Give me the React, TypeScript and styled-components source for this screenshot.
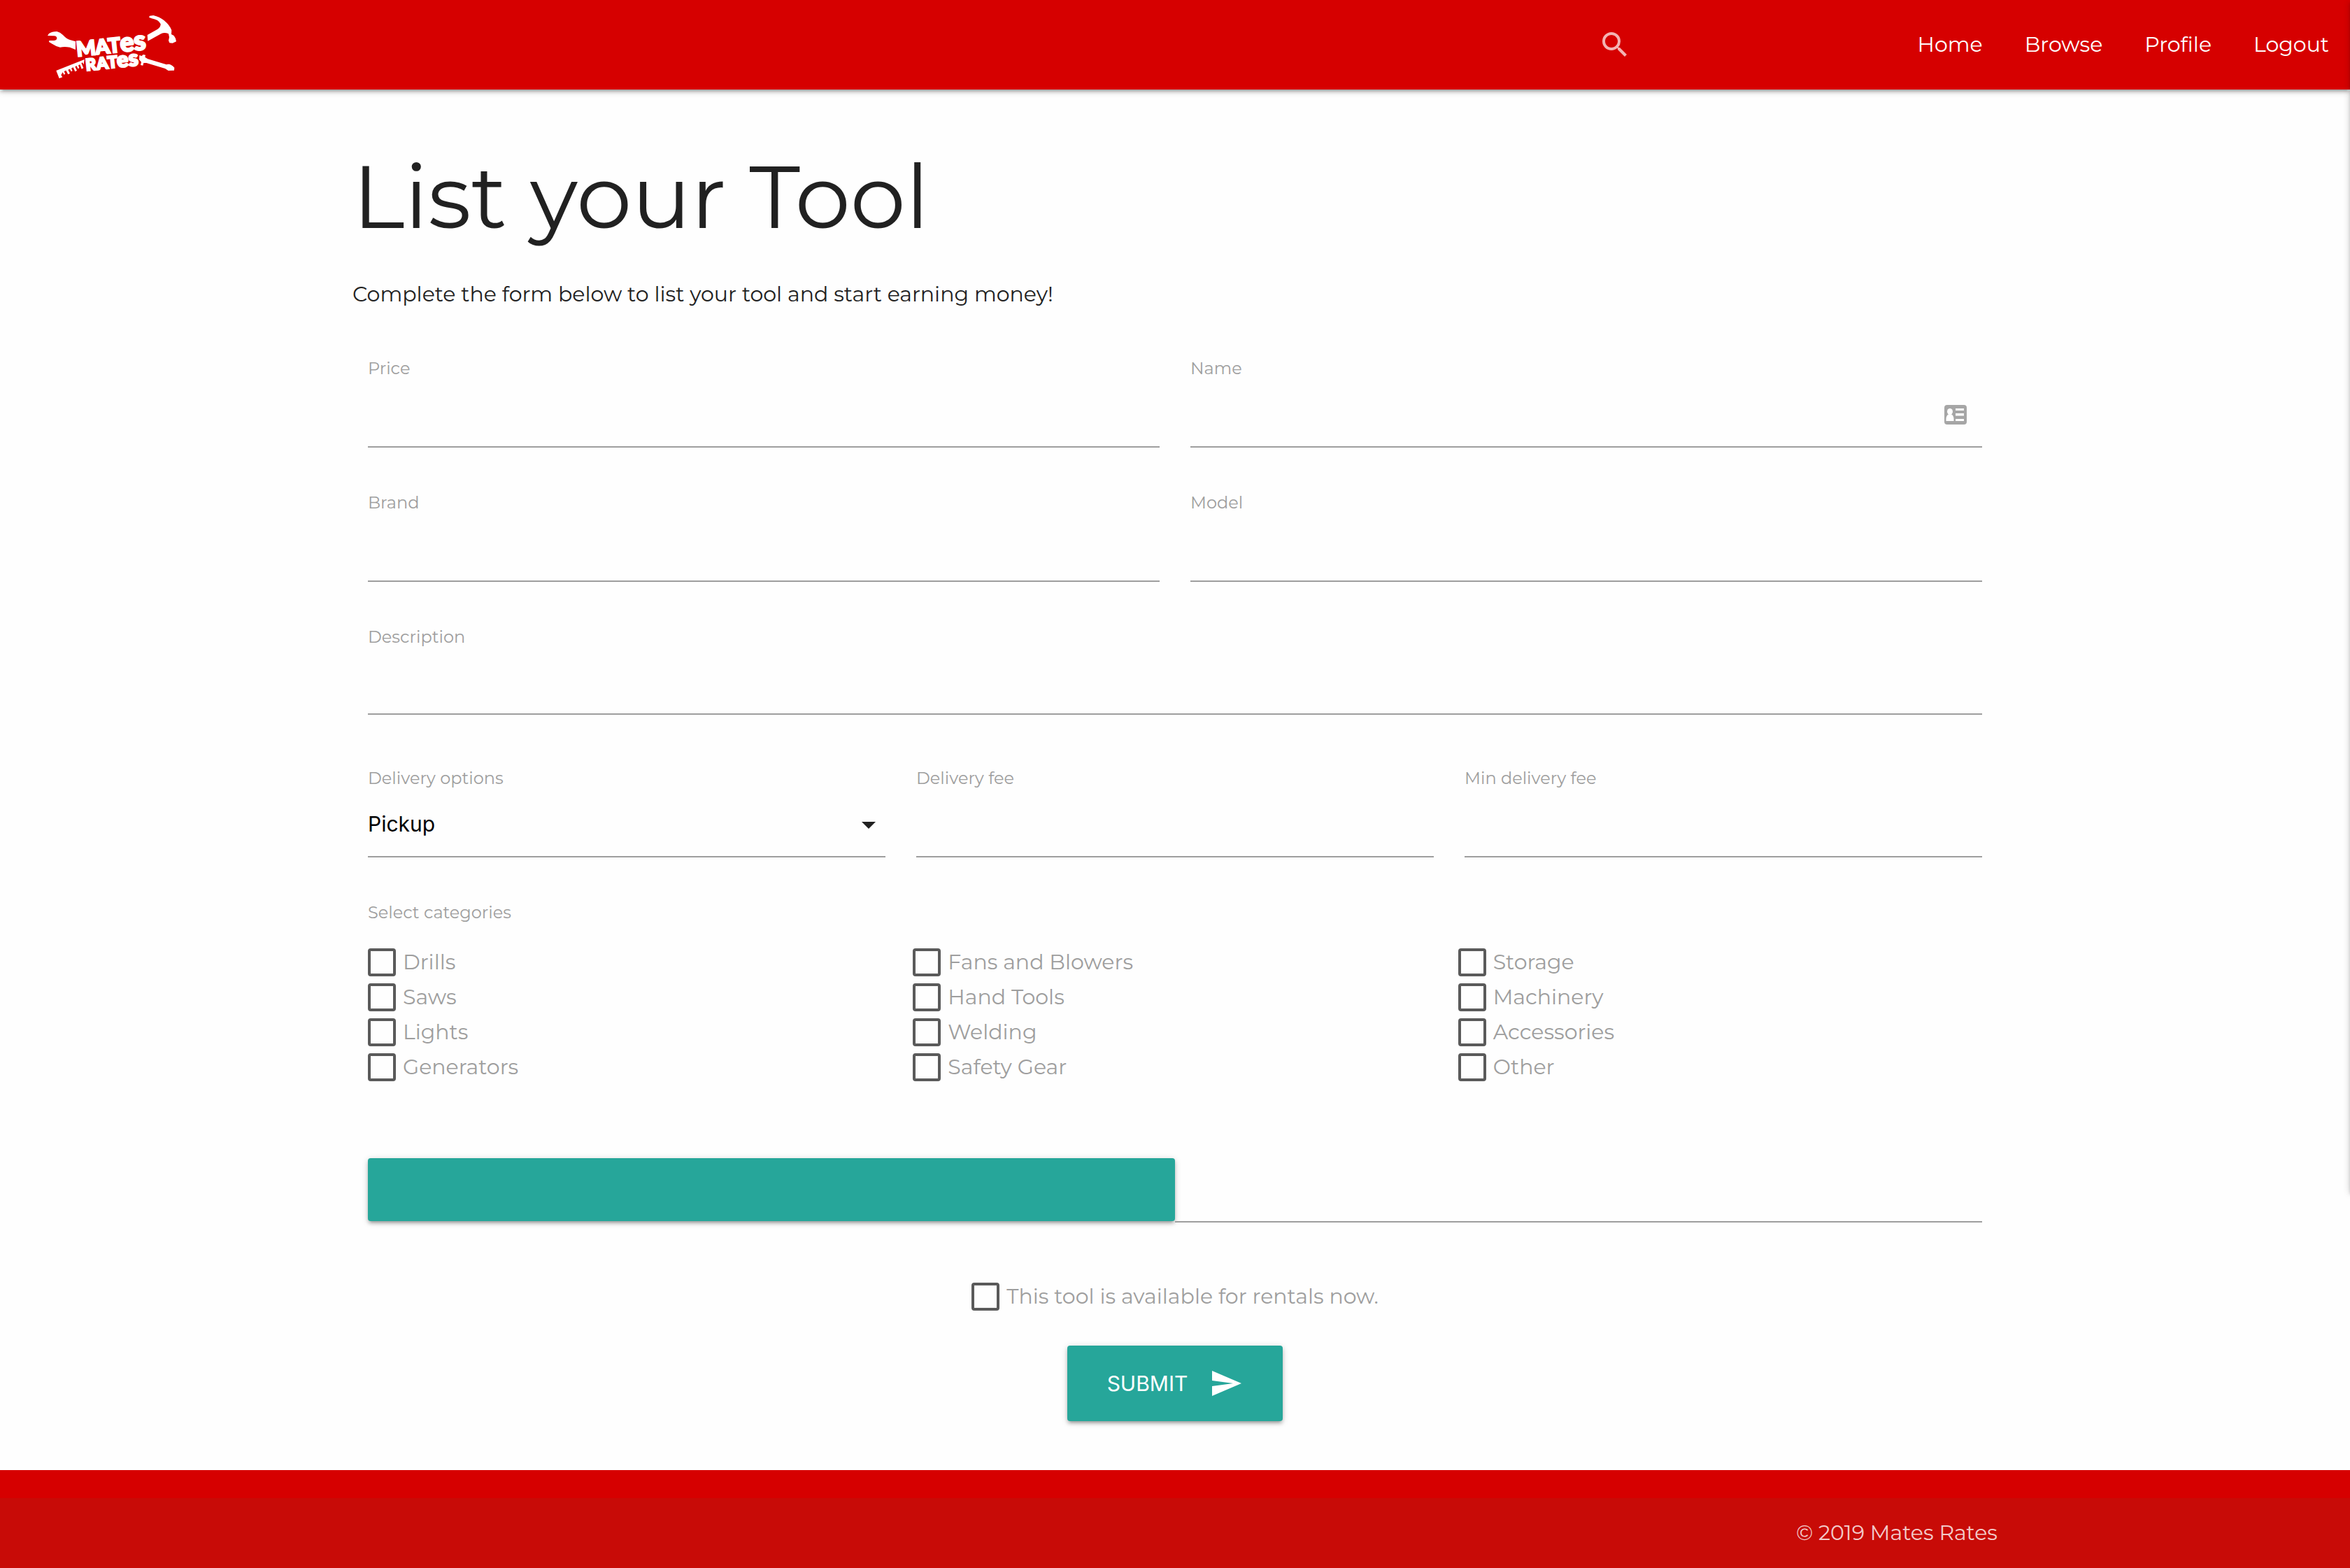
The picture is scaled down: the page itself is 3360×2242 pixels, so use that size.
import React from "react";
import styled, { createGlobalStyle, css } from "styled-components";
import { MdArrowDropDown, MdSearch, MdSend } from "react-icons/md";

const color = {
  red: "#d60000",
  redDark: "#c80b07",
  teal: "#26a69a",
  ink: "#212121",
  muted: "#9e9e9e",
  box: "#5a5a5a",
  page: "#fefefe",
};

const raised = css`
  box-shadow:
    0 4px 4px 0 rgba(0, 0, 0, 0.14),
    0 6px 2px -4px rgba(0, 0, 0, 0.12),
    0 2px 10px 0 rgba(0, 0, 0, 0.2);
`;

const GlobalStyle = createGlobalStyle`
  *, *::before, *::after { box-sizing: border-box; }
  body {
    margin: 0;
    background: ${color.page};
    color: ${color.ink};
    font-family: Montserrat, Inter, "Liberation Sans", sans-serif;
    font-size: 30px;
    line-height: 46px;
  }
  input, select, button { font: inherit; color: inherit; }
`;

const Page = styled.div`
  display: flex;
  flex-direction: column;
  min-height: 100vh;
`;

const NavBar = styled.header`
  display: flex;
  align-items: center;
  height: 128px;
  padding-left: 66px;
  background: ${color.red};
  color: #fff;
  z-index: 1;
  ${raised}
`;

const LogoLink = styled.a`
  display: block;
  margin-right: auto;
  padding-top: 6px;

  svg {
    display: block;
  }
`;

const SearchButton = styled.button`
  display: flex;
  padding: 0;
  margin-right: 379px;
  border: 0;
  background: none;
  color: rgba(255, 255, 255, 0.7);
  font-size: 48px;
`;

const NavLinks = styled.nav`
  display: flex;
`;

const NavLink = styled.a`
  padding: 0 30px;
  color: #fff;
  text-decoration: none;
`;

const DrawerEdge = styled.aside`
  position: fixed;
  top: 0;
  left: 100%;
  width: 600px;
  height: 76vh;
  z-index: 2;
  ${raised}
`;

const Main = styled.main`
  flex: 1;
  width: 70%;
  margin: 0 auto;
  padding: 83px 0 70px;
`;

const Title = styled.h1`
  margin: 0 0 47px;
  font-size: 126px;
  line-height: 140px;
  font-weight: 400;
`;

const Intro = styled.p`
  margin: 0 0 68px;
`;

const Form = styled.form`
  padding: 0 22px;
`;

const Row = styled.div<{ $cols?: number; $after?: number }>`
  display: grid;
  grid-template-columns: repeat(${(p) => p.$cols ?? 1}, 1fr);
  column-gap: 44px;
  margin-bottom: ${(p) => p.$after ?? 64}px;
`;

const Field = styled.div`
  display: flex;
  flex-direction: column;
`;

const caption = css`
  color: ${color.muted};
  font-size: 24px;
  line-height: 30px;
`;

const Label = styled.label`
  ${caption}
`;

const Stack = styled.div`
  display: grid;
  align-items: center;
  justify-items: end;

  > * {
    grid-area: 1 / 1;
  }
  > svg {
    margin-top: 4px;
    pointer-events: none;
  }
`;

const underline = css`
  width: 100%;
  border: 0;
  border-bottom: 2px solid ${color.muted};
  border-radius: 0;
  background: transparent;
  outline: none;
  padding: 0;
`;

const TextInput = styled.input<{ $short?: boolean }>`
  ${underline}
  height: ${(p) => (p.$short ? 96 : 98)}px;
`;

const Select = styled.select`
  ${underline}
  height: 98px;
  padding-top: 4px;
  appearance: none;
  color: #000;
  font-family: Inter, "Liberation Sans", sans-serif;
`;

const Arrow = styled(MdArrowDropDown)`
  width: 48px;
  height: 48px;
`;

const CardIcon = styled.svg`
  width: 32px;
  height: 28px;
  margin-right: 22px;
`;

const Categories = styled.fieldset`
  margin: 0 0 105px;
  padding: 0;
  border: 0;
`;

const Legend = styled.legend`
  ${caption}
  padding: 0;
  margin-bottom: 31px;
`;

const CategoryGrid = styled.div`
  display: grid;
  grid-template-columns: repeat(3, 1fr);
  grid-template-rows: repeat(4, 50px);
  grid-auto-flow: column;
  column-gap: 30px;
`;

const CheckLabel = styled.label`
  display: flex;
  align-items: center;
  gap: 10px;
  height: 50px;
  color: ${color.muted};
`;

const Checkbox = styled.input`
  appearance: none;
  width: 40px;
  height: 40px;
  margin: 0;
  border: 4px solid ${color.box};
  border-radius: 4px;

  &:checked {
    background: ${color.teal};
    border-color: ${color.teal};
  }
`;

const FileRow = styled.div`
  display: grid;
  grid-template-columns: 1fr 1fr;
  align-items: start;
  margin-bottom: 81px;
`;

const FileButton = styled.label`
  height: 90px;
  border-radius: 4px;
  background: ${color.teal};
  overflow: hidden;
  ${raised}

  input {
    width: 100%;
    height: 100%;
    opacity: 0;
  }
`;

const FilePath = styled.input`
  ${underline}
  height: 92px;
`;

const Actions = styled.div`
  display: flex;
  flex-direction: column;
  align-items: center;
  gap: 45px;
`;

const SubmitButton = styled.button`
  display: flex;
  align-items: center;
  gap: 31px;
  height: 108px;
  padding: 0 57px;
  border: 0;
  border-radius: 4px;
  background: ${color.teal};
  color: #fff;
  font-family: Inter, "Liberation Sans", sans-serif;
  text-transform: uppercase;
  ${raised}

  svg {
    width: 48px;
    height: 48px;
  }
`;

const Footer = styled.footer`
  padding-top: 40px;
  background: ${color.red};
`;

const Copyright = styled.div`
  display: flex;
  align-items: center;
  height: 100px;
  background: ${color.redDark};
  color: rgba(255, 255, 255, 0.8);
`;

const FooterInner = styled.div`
  width: 70%;
  margin: 0 auto;
  text-align: right;
`;

function Logo() {
  return (
    <svg width="188" height="92" viewBox="198 63 564 276" fill="#fff" role="img" aria-label="Mates Rates">
      <path d="M204 153 L210 144 Q222 135 244 135 Q258 138 270 150 Q284 166 300 171 L324 178 L324 213 L300 203 Q276 199 258 203 Q240 199 224 188 L210 180 L211 174 L232 174 Q246 171 244 161 Q240 152 228 154 Z" />
      <path d="M639 74 L642 68 L658 66 Q684 72 704 88 Q728 108 736 130 L735 147 L746 153 Q756 166 756 178 L740 185 L727 184 L723 174 L726 160 L723 145 Q706 138 692 144 L634 176 L632 150 L676 125 Q690 116 689 103 Q680 84 650 79 Z" />
      <path d="M241 303 L362 255 L359 277 L354 268 L349 271 L358 292 L350 296 L343 277 L336 280 L340 292 L334 295 L329 283 L322 286 L330 303 L322 307 L314 289 L306 293 L311 304 L305 307 L300 296 L292 299 L300 315 L292 319 L283 302 L275 306 L280 317 L274 320 L269 310 L262 322 L268 331 L254 336 Z" />
      <path d="M598 237 L608 240 L614 234 L624 236 L622 245 L634 253 L714 277 Q730 271 748 290 L747 302 L722 303 L708 294 L628 270 L616 270 L613 281 L603 279 L606 266 L597 256 Z" />
      <g fontFamily="Lato, Inter, sans-serif" fontWeight="900" stroke="#fff" strokeWidth="7" strokeLinejoin="miter">
        <text transform="translate(336 242) rotate(-6)" fontSize="87">
          <tspan x="-5">M</tspan>
          <tspan x="76">A</tspan>
          <tspan x="132">T</tspan>
          <tspan x="183" fontSize="112">e</tspan>
          <tspan x="243" fontSize="116">s</tspan>
        </text>
        <text transform="translate(374 303) rotate(-6)" fontSize="70">
          <tspan x="-4">R</tspan>
          <tspan x="43">A</tspan>
          <tspan x="91">T</tspan>
          <tspan x="131" fontSize="92">e</tspan>
          <tspan x="181" fontSize="94">s</tspan>
        </text>
      </g>
    </svg>
  );
}

function ContactCardIcon() {
  return (
    <CardIcon viewBox="0 0 32 28" aria-hidden="true">
      <rect width="32" height="28" rx="4" fill="#a6a6a6" />
      <g fill="#fff">
        <ellipse cx="8" cy="9.500" rx="4" ry="4.500" />
        <path d="M2.500 23v-3q0-4 3-6.500h5q3 2.500 3 6.500v3z" />
        <path d="M16 5h12v3H16zM16 12h12v3.500H16zM16 20h12v3H16z" />
      </g>
    </CardIcon>
  );
}

type TextFieldProps = { id: string; label: string; short?: boolean; icon?: React.ReactNode };

function TextField({ id, label, short, icon }: TextFieldProps) {
  return (
    <Field>
      <Label htmlFor={id}>{label}</Label>
      <Stack>
        <TextInput id={id} name={id} type="text" $short={short} />
        {icon}
      </Stack>
    </Field>
  );
}

const links = ["Home", "Browse", "Profile", "Logout"];

const categories = [
  "Drills", "Saws", "Lights", "Generators",
  "Fans and Blowers", "Hand Tools", "Welding", "Safety Gear",
  "Storage", "Machinery", "Accessories", "Other",
];

export default function App() {
  return (
    <Page>
      <GlobalStyle />
      <NavBar>
        <LogoLink href="#">
          <Logo />
        </LogoLink>
        <SearchButton type="button" aria-label="Search">
          <MdSearch />
        </SearchButton>
        <NavLinks>
          {links.map((name) => (
            <NavLink key={name} href="#">{name}</NavLink>
          ))}
        </NavLinks>
      </NavBar>
      <DrawerEdge aria-hidden="true" />

      <Main>
        <Title>List your Tool</Title>
        <Intro>Complete the form below to list your tool and start earning money!</Intro>
        <Form onSubmit={(e) => e.preventDefault()}>
          <Row $cols={2}>
            <TextField id="price" label="Price" />
            <TextField id="name" label="Name" icon={<ContactCardIcon />} />
          </Row>
          <Row $cols={2}>
            <TextField id="brand" label="Brand" />
            <TextField id="model" label="Model" />
          </Row>
          <Row $after={76}>
            <TextField id="description" label="Description" short />
          </Row>
          <Row $cols={3}>
            <Field>
              <Label htmlFor="delivery">Delivery options</Label>
              <Stack>
                <Select id="delivery" name="delivery" defaultValue="Pickup">
                  <option>Pickup</option>
                  <option>Delivery</option>
                </Select>
                <Arrow aria-hidden="true" />
              </Stack>
            </Field>
            <TextField id="fee" label="Delivery fee" />
            <TextField id="minfee" label="Min delivery fee" />
          </Row>
          <Categories>
            <Legend>Select categories</Legend>
            <CategoryGrid>
              {categories.map((name) => (
                <CheckLabel key={name}>
                  <Checkbox type="checkbox" name="category" value={name} />
                  {name}
                </CheckLabel>
              ))}
            </CategoryGrid>
          </Categories>
          <FileRow>
            <FileButton>
              <input type="file" aria-label="Photo" />
            </FileButton>
            <FilePath type="text" readOnly aria-label="Photo file name" />
          </FileRow>
          <Actions>
            <CheckLabel>
              <Checkbox type="checkbox" name="available" />
              This tool is available for rentals now.
            </CheckLabel>
            <SubmitButton type="submit">
              Submit
              <MdSend aria-hidden="true" />
            </SubmitButton>
          </Actions>
        </Form>
      </Main>

      <Footer>
        <Copyright>
          <FooterInner>© 2019 Mates Rates</FooterInner>
        </Copyright>
      </Footer>
    </Page>
  );
}
